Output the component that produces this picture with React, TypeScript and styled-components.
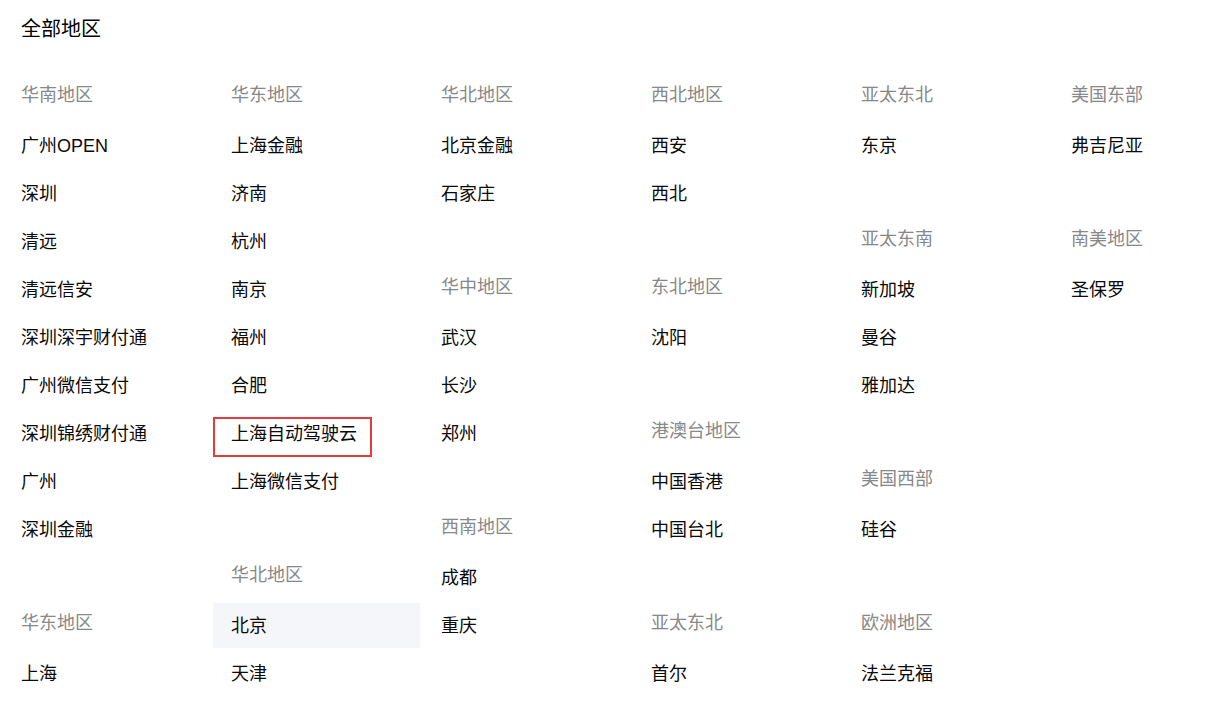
import React from 'react';
import styled, { createGlobalStyle } from 'styled-components';

const GlobalStyle = createGlobalStyle`
  html, body {
    margin: 0;
    padding: 0;
    background: #ffffff;
  }
  body {
    font-family: "Liberation Sans", "Noto Sans CJK SC", sans-serif;
    color: #000000;
  }
`;

type Group = {
  title: string;
  items: string[];
};

const columns: Group[][] = [
  [
    {
      title: '华南地区',
      items: ['广州OPEN', '深圳', '清远', '清远信安', '深圳深宇财付通', '广州微信支付', '深圳锦绣财付通', '广州', '深圳金融'],
    },
    { title: '华东地区', items: ['上海'] },
  ],
  [
    {
      title: '华东地区',
      items: ['上海金融', '济南', '杭州', '南京', '福州', '合肥', '上海自动驾驶云', '上海微信支付'],
    },
    { title: '华北地区', items: ['北京', '天津'] },
  ],
  [
    { title: '华北地区', items: ['北京金融', '石家庄'] },
    { title: '华中地区', items: ['武汉', '长沙', '郑州'] },
    { title: '西南地区', items: ['成都', '重庆'] },
  ],
  [
    { title: '西北地区', items: ['西安', '西北'] },
    { title: '东北地区', items: ['沈阳'] },
    { title: '港澳台地区', items: ['中国香港', '中国台北'] },
    { title: '亚太东北', items: ['首尔'] },
  ],
  [
    { title: '亚太东北', items: ['东京'] },
    { title: '亚太东南', items: ['新加坡', '曼谷', '雅加达'] },
    { title: '美国西部', items: ['硅谷'] },
    { title: '欧洲地区', items: ['法兰克福'] },
  ],
  [
    { title: '美国东部', items: ['弗吉尼亚'] },
    { title: '南美地区', items: ['圣保罗'] },
  ],
];

const Page = styled.div`
  padding: 13px 0 0 3px;
`;

const Title = styled.h2`
  margin: 2px 0 0 18px;
  height: 28px;
  line-height: 28px;
  font-size: 20px;
  font-weight: 400;
  color: #000000;
`;

const RegionGrid = styled.div`
  display: grid;
  grid-template-columns: repeat(6, 210px);
  align-items: start;
  margin-top: 32px;
`;

const Column = styled.div`
  display: flex;
  flex-direction: column;
`;

const GroupBlock = styled.div`
  display: flex;
  flex-direction: column;
  gap: 3px;

  & + & {
    margin-top: 51px;
  }
`;

const GroupTitle = styled.div`
  height: 45px;
  line-height: 41px;
  padding-left: 18px;
  font-size: 18px;
  color: #888888;
  white-space: nowrap;
`;

const Item = styled.div<{ $hover?: boolean; $marked?: boolean }>`
  position: relative;
  box-sizing: border-box;
  width: 207px;
  height: 45px;
  line-height: 47px;
  padding-left: 18px;
  font-size: 18px;
  color: #0a0a0a;
  white-space: nowrap;
  background: ${(p) => (p.$hover ? '#f5f6f9' : 'transparent')};
  cursor: pointer;

  ${(p) =>
    p.$marked &&
    `
    &::after {
      content: '';
      position: absolute;
      left: 0;
      top: 6px;
      width: 159px;
      height: 40px;
      box-sizing: border-box;
      border: 2px solid #e8393d;
    }
  `}
`;

export default function App() {
  return (
    <>
      <GlobalStyle />
      <Page>
        <Title>全部地区</Title>
        <RegionGrid>
          {columns.map((groups, ci) => (
            <Column key={ci}>
              {groups.map((g, gi) => (
                <GroupBlock key={gi}>
                  <GroupTitle>{g.title}</GroupTitle>
                  {g.items.map((name) => (
                    <Item
                      key={name}
                      $hover={ci === 1 && name === '北京'}
                      $marked={name === '上海自动驾驶云'}
                    >
                      {name}
                    </Item>
                  ))}
                </GroupBlock>
              ))}
            </Column>
          ))}
        </RegionGrid>
      </Page>
    </>
  );
}
